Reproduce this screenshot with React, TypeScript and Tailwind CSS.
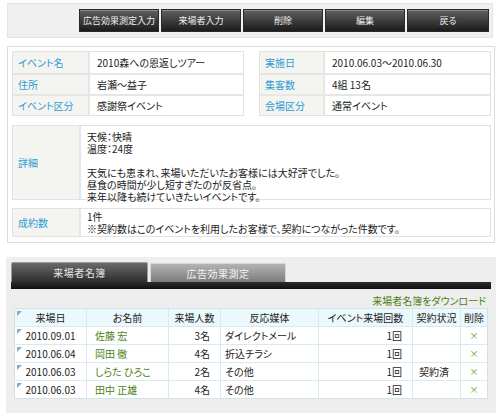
import React from "react";

const FONT = "font-['Noto_Sans_CJK_JP','Noto_Sans',sans-serif]";

const 上部ボタン = [
  { ラベル: "広告効果測定入力", 幅: "w-[80px]" },
  { ラベル: "来場者入力", 幅: "w-[80px]" },
  { ラベル: "削除", 幅: "w-[80px]" },
  { ラベル: "編集", 幅: "w-[80px]" },
  { ラベル: "戻る", 幅: "w-[82px]" },
];

const 左項目 = [
  ["イベント名", "2010森への恩返しツアー"],
  ["住所", "岩瀬〜益子"],
  ["イベント区分", "感謝祭イベント"],
];

const 右項目 = [
  ["実施日", "2010.06.03〜2010.06.30"],
  ["集客数", "4組 13名"],
  ["会場区分", "通常イベント"],
];

const 来場者 = [
  { 日: "2010.09.01", 名前: "佐藤 宏", 人数: "3名", 媒体: "ダイレクトメール", 回数: "1回", 契約: "" },
  { 日: "2010.06.04", 名前: "岡田 徹", 人数: "4名", 媒体: "折込チラシ", 回数: "1回", 契約: "" },
  { 日: "2010.06.03", 名前: "しらた ひろこ", 人数: "2名", 媒体: "その他", 回数: "1回", 契約: "契約済" },
  { 日: "2010.06.03", 名前: "田中 正雄", 人数: "4名", 媒体: "その他", 回数: "1回", 契約: "" },
];

function 情報表({ 行, ラベル幅 }: { 行: string[][]; ラベル幅: string }) {
  return (
    <div className="w-[232px] border border-[#e2e2e2]">
      {行.map(([k, v], i) => (
        <div key={k} className={`flex h-[21px] ${i > 0 ? "border-t-2 border-[#e6e6e6]" : ""}`}>
          <div className={`${ラベル幅} flex items-center bg-[#f4f4f1] pl-[5px] text-[#2e9bd3] border-r-2 border-[#e6e6e6]`}>
            {k}
          </div>
          <div className="flex flex-1 items-center pl-[7px] text-[#222]">{v}</div>
        </div>
      ))}
    </div>
  );
}

export default function App() {
  return (
    <div className={`relative h-[418px] w-[500px] overflow-hidden bg-white ${FONT} text-[10px] [font-feature-settings:'palt']`}>
      {/* 操作ボタン */}
      <div className="mx-[7px] mt-[3px] flex h-[35px] w-[486px] items-center justify-end gap-[2px] border border-[#e4e4e4] bg-[#f0f0f0] pr-[3px]">
        {上部ボタン.map((b) => (
          <button
            key={b.ラベル}
            className={`${b.幅} h-[23px] whitespace-nowrap border border-[#2a2a2a] bg-gradient-to-b from-[#626262] to-[#1c1c1c] text-[9px] leading-[21px] text-[#eeeeee] shadow-[inset_0_1px_0_#8a8a8a]`}
          >
            {b.ラベル}
          </button>
        ))}
      </div>

      {/* イベント情報 */}
      <div className="ml-[7px] mt-[8px] flex h-[197px] w-[488px] flex-col border border-[#dcdcdc] pl-[4px] pr-[3px] pt-[4px]">
        <div className="flex gap-[15px]">
          <情報表 行={左項目} ラベル幅="w-[77px]" />
          <情報表 行={右項目} ラベル幅="w-[65px]" />
        </div>

        <div className="mt-[9px] flex h-[75px] border border-[#e2e2e2]">
          <div className="flex w-[68px] items-center border-r-2 border-[#e6e6e6] bg-[#f4f4f1] pl-[5px] text-[#2e9bd3]">
            詳細
          </div>
          <div className="flex-1 pl-[6px] pt-[5px] text-[#222]">
            <div className="h-[12px] leading-[12px]">天候：快晴</div>
            <div className="h-[12px] leading-[12px]">温度：24度</div>
            <div className="h-[12px]" />
            <div className="h-[12px] leading-[12px]">天気にも恵まれ、来場いただいたお客様には大好評でした。</div>
            <div className="h-[12px] leading-[12px]">昼食の時間が少し短すぎたのが反省点。</div>
            <div className="h-[12px] leading-[12px]">来年以降も続けていきたいイベントです。</div>
          </div>
        </div>

        <div className="mt-[8px] flex h-[29px] border border-[#e2e2e2]">
          <div className="flex w-[68px] items-center border-r-2 border-[#e6e6e6] bg-[#f4f4f1] pl-[5px] text-[#2e9bd3]">
            成約数
          </div>
          <div className="flex-1 pl-[6px] pt-[2px] text-[#222]">
            <div className="h-[12px] leading-[12px]">1件</div>
            <div className="h-[12px] leading-[12px]">※契約数はこのイベントを利用したお客様で、契約につながった件数です。</div>
          </div>
        </div>
      </div>

      {/* タブ領域 */}
      <div className="ml-[6px] mt-[14px] h-[156px] w-[490px] bg-[#eeeeee] pl-[5px] pr-[5px] pt-[5px]">
        <div className="flex items-end gap-[2px]">
          <div className="flex h-[20px] w-[137px] items-center justify-center rounded-t-[2px] border border-b-0 border-[#999] bg-gradient-to-b from-[#6a6a6a] to-[#2e2e2e] text-[10px] tracking-[0.5px] text-[#e8e8e8]">
            来場者名簿
          </div>
          <div className="flex h-[19px] w-[136px] items-center justify-center border border-b-0 border-[#d8d8d8] bg-gradient-to-b from-[#b4b4b4] to-[#7c7c7c] text-[10px] tracking-[0.5px] text-[#f4f4f4]">
            広告効果測定
          </div>
        </div>
        <div className="h-[7px] w-[480px] bg-gradient-to-b from-[#2c2c2c] to-[#111]" />

        <div className="flex h-[19px] items-end justify-end pr-[5px] text-[#4d7f16]">来場者名簿をダウンロード</div>

        <div className="ml-[3px] w-[474px] border border-[#cfe4e8] bg-white text-[#222]">
          <div className="flex h-[17px] bg-[#ebf8fc]">
            {[
              ["来場日", "w-[71px]"],
              ["お名前", "w-[82px]"],
              ["来場人数", "w-[52px]"],
              ["反応媒体", "w-[98px]"],
              ["イベント来場回数", "w-[94px]"],
              ["契約状況", "w-[48px]"],
              ["削除", "flex-1"],
            ].map(([t, w], i) => (
              <div
                key={t}
                className={`relative ${w} flex items-center justify-center ${i > 0 ? "border-l border-[#d7eaee]" : ""}`}
              >
                {i === 0 && (
                  <span className="absolute left-[2px] top-[2px] h-0 w-0 border-l-[5px] border-t-[5px] border-l-transparent border-t-[#8da8c4] -scale-x-100" />
                )}
                {t}
              </div>
            ))}
          </div>
          {来場者.map((r, i) => (
            <div key={i} className="flex h-[18px] border-t border-[#d7eaee]">
              <div className="relative flex w-[71px] items-center justify-center">
                <span className="absolute left-[2px] top-[2px] h-0 w-0 border-l-[5px] border-t-[5px] border-l-transparent border-t-[#8da8c4] -scale-x-100" />
                {r.日}
              </div>
              <div className="flex w-[82px] items-center border-l border-[#d7eaee] pl-[8px] text-[#4d7f16]">{r.名前}</div>
              <div className="flex w-[52px] items-center justify-end border-l border-[#d7eaee] pr-[10px]">{r.人数}</div>
              <div className="flex w-[98px] items-center border-l border-[#d7eaee] pl-[4px]">{r.媒体}</div>
              <div className="flex w-[94px] items-center justify-end border-l border-[#d7eaee] pr-[10px]">{r.回数}</div>
              <div className="flex w-[48px] items-center border-l border-[#d7eaee] pl-[6px]">{r.契約}</div>
              <div className="flex flex-1 items-center justify-center border-l border-[#d7eaee] text-[9px] text-[#4d9a1e]">×</div>
            </div>
          ))}
        </div>
      </div>
    </div>
  );
}
